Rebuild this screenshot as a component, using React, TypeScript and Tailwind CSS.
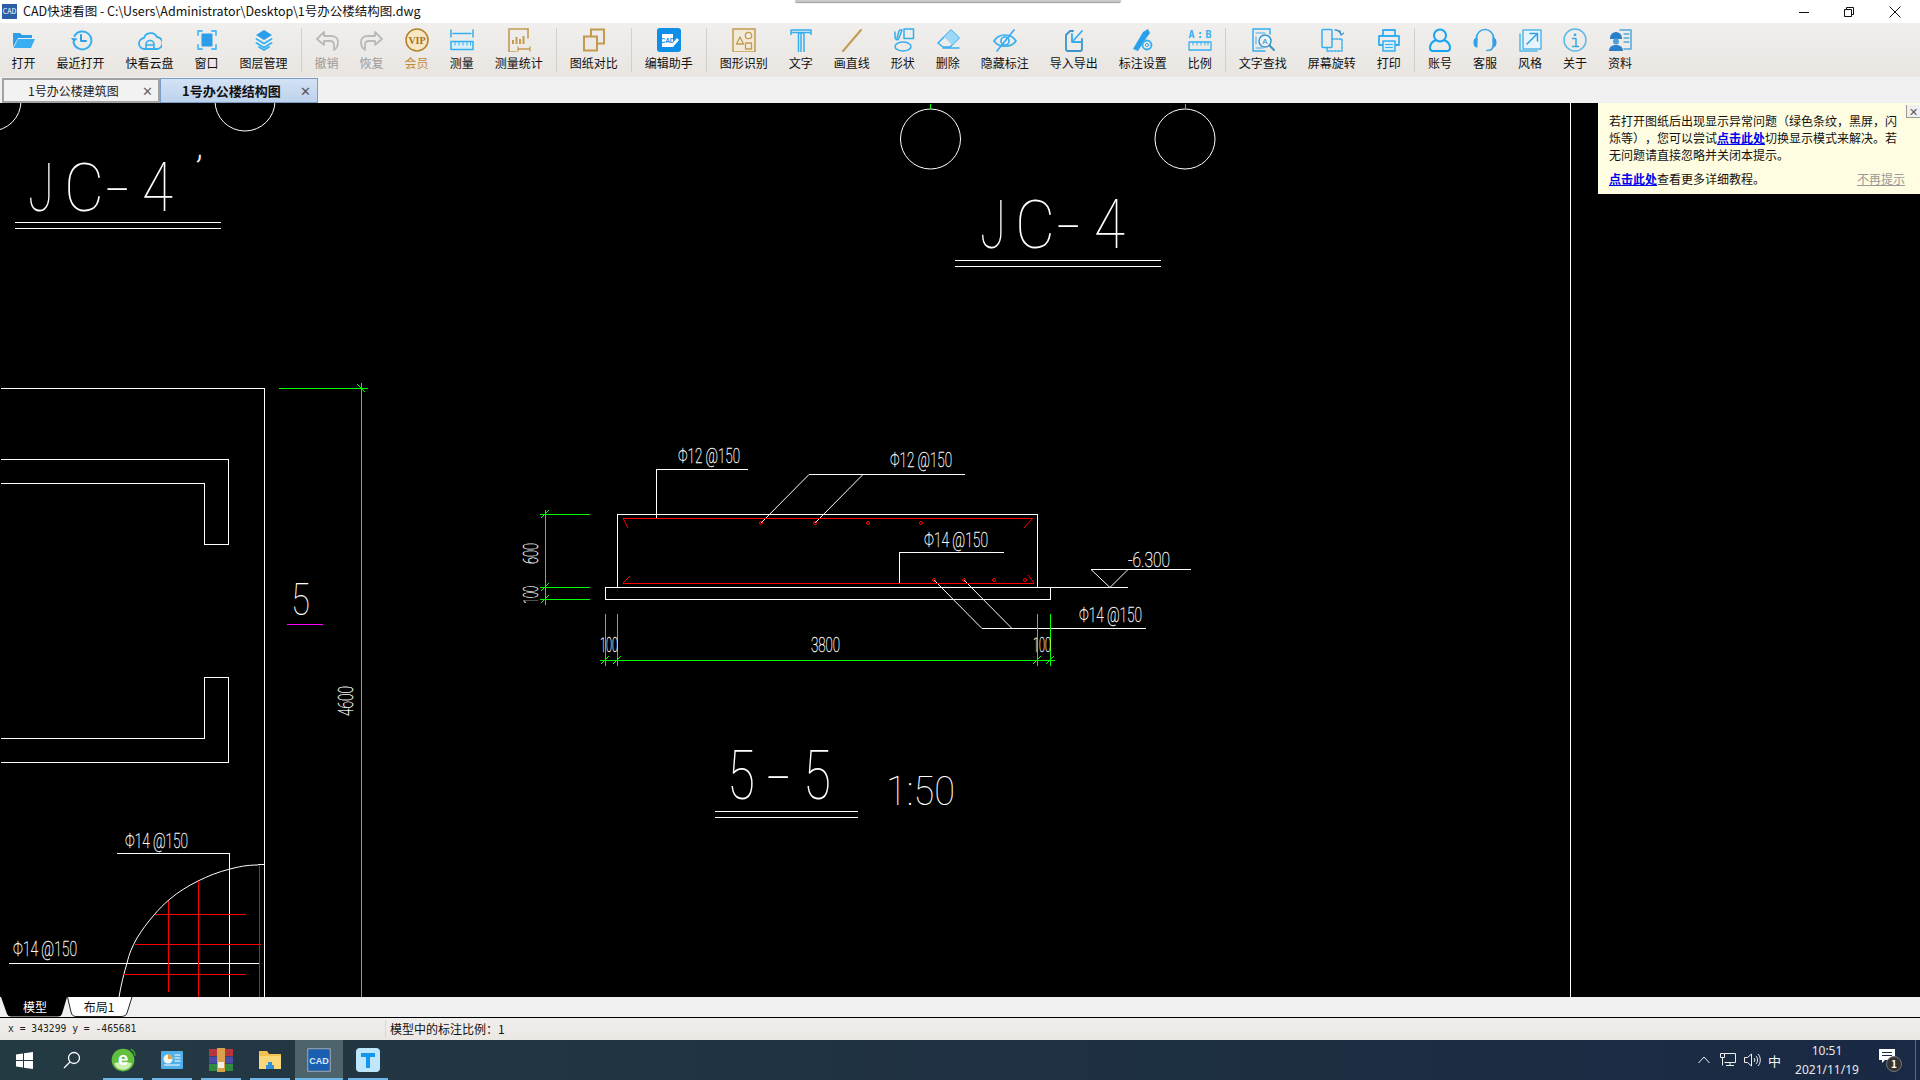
import React from "react";

const B = "#35aef0";
const G = "#c39a4f";
const D = "#b9b9b9";

type IP = { children: React.ReactNode };
const S = ({ children }: IP) => (
  <svg width="24" height="24" viewBox="0 0 24 24" fill="none" strokeLinecap="round" strokeLinejoin="round">
    {children}
  </svg>
);

const icons: Record<string, React.ReactNode> = {
  open: (
    <S>
      <path d="M1 5h7l2 2h10v3H6L1 19z" fill="#2c9fe8" />
      <path d="M6 11h17l-4 9H1.500z" fill="#38aff2" />
    </S>
  ),
  recent: (
    <S>
      <path d="M5.500 8a9 9 0 1 1-1 6" stroke={B} strokeWidth="2" />
      <path d="M2 10l3 4 3.500-3.500" fill="#2c9fe8" />
      <path d="M12 7v6h5" stroke="#2c9fe8" strokeWidth="2" />
    </S>
  ),
  cloud: (
    <S>
      <path d="M7 21a5.500 5.500 0 0 1-1-11 7 7 0 0 1 13-1 6 6 0 0 1-1 12z" stroke={B} strokeWidth="1.800" />
      <path d="M8 21v-4.500a4 4 0 0 1 8 0V21M8 17h8" stroke={B} strokeWidth="1.600" />
    </S>
  ),
  win: (
    <S>
      <rect x="6.500" y="5.500" width="11" height="13" rx="1" fill="#2a9ee8" />
      <path d="M3 7V3h4M17 3h4v4M21 17v4h-4M7 21H3v-4" stroke="#4fbcf5" strokeWidth="1.800" />
    </S>
  ),
  layer: (
    <S>
      <path d="M12 2l8 5-8 5-8-5z" fill="#2a9ee8" />
      <path d="M4.500 11l7.500 4.500 7.500-4.500M4.500 15l7.500 4.500 7.500-4.500M7 19l5 3 5-3" stroke="#3cb4f2" strokeWidth="2" />
    </S>
  ),
  undo: (
    <S>
      <path d="M9 4L2 11l7 6v-4h6c3 0 4 2 4 4v5c3-2 4-5 4-8 0-4-3-6-7-6H9z" stroke={D} strokeWidth="1.800" />
    </S>
  ),
  redo: (
    <S>
      <path d="M15 4l7 7-7 6v-4H9c-3 0-4 2-4 4v5c-3-2-4-5-4-8 0-4 3-6 7-6h7z" stroke={D} strokeWidth="1.800" />
    </S>
  ),
  vip: (
    <S>
      <circle cx="12" cy="12" r="11" stroke="#b5842f" strokeWidth="1.600" fill="#f6e8c4" />
      <text x="12" y="15.500" textAnchor="middle" fontSize="10" fontWeight="700" fill="#a8701c" fontFamily="Liberation Serif, serif">VIP</text>
    </S>
  ),
  measure: (
    <S>
      <path d="M1 2v7M23 2v7M3 5.500h18" stroke={B} strokeWidth="1.500" />
      <path d="M1 13.500h22v8H1z" stroke={B} strokeWidth="1.500" fill="#d8effa" />
      <path d="M5 14v3M9 14v3M13 14v3M17 14v3M20.500 14v3" stroke={B} />
    </S>
  ),
  stat: (
    <S>
      <path d="M21 1H2v23h7" stroke={G} strokeWidth="1.600" />
      <path d="M21 1v9" stroke={G} strokeWidth="1.600" />
      <path d="M6 12v4M9.500 9v7M13 11v5M16.500 8v8" stroke={G} strokeWidth="2" strokeLinecap="butt" />
      <path d="M11 19v4M23 19v4M12 21h10" stroke={G} strokeWidth="1.300" />
    </S>
  ),
  compare: (
    <S>
      <rect x="9" y="1.500" width="13" height="14" stroke={G} strokeWidth="2" strokeLinejoin="miter" />
      <rect x="2" y="8.500" width="13" height="14" stroke={G} strokeWidth="2" strokeLinejoin="miter" fill="#ece9e5" />
    </S>
  ),
  helper: (
    <S>
      <rect width="24" height="24" rx="3" fill="#0f8fe8" />
      <path d="M5 6h11v13H5z" fill="#fff" />
      <text x="10.500" y="14.500" textAnchor="middle" fontSize="6.500" fontWeight="700" fill="#0f8fe8" fontFamily="Liberation Sans, sans-serif">CAD</text>
      <path d="M14 17l6-7 2 2-6 7z" fill="#fff" />
    </S>
  ),
  shape: (
    <S>
      <rect x="1" y="1" width="22" height="23" stroke={G} strokeWidth="1.500" fill="#f1ead8" />
      <path d="M8 9l-3.500 7h7z" stroke={G} strokeWidth="1.300" />
      <circle cx="16.500" cy="7.500" r="3.200" stroke={G} strokeWidth="1.300" />
      <rect x="13.500" y="15" width="6" height="6" stroke={G} strokeWidth="1.300" />
    </S>
  ),
  text: (
    <S>
      <path d="M2 7V2h20v5M2 4.500h20M9 5h6v19M12 5v19M9.500 24V5" stroke={B} strokeWidth="1.500" strokeLinecap="butt" />
    </S>
  ),
  line: (
    <S>
      <path d="M3 23L21 2" stroke={G} strokeWidth="2" />
    </S>
  ),
  form: (
    <S>
      <rect x="13" y="1" width="9.500" height="9.500" stroke={B} strokeWidth="1.500" />
      <ellipse cx="12" cy="18.500" rx="8" ry="4.500" stroke={B} strokeWidth="1.500" />
      <path d="M4 4v5c0 3 3 4 4 1l3-8c0 0-2-1-3 1l-2 7" stroke={B} strokeWidth="1.500" />
    </S>
  ),
  erase: (
    <S>
      <path d="M2 15L15 2l8 8-9 9H7z" stroke={B} strokeWidth="1.500" />
      <path d="M8 9l8 8 7-7-8-8z" fill="#9fd8f6" />
      <path d="M7 20h16" stroke={B} strokeWidth="1.500" />
    </S>
  ),
  eye: (
    <S>
      <path d="M1 13c5-8 17-8 22 0-5 7-17 7-22 0z" stroke={B} strokeWidth="1.700" />
      <circle cx="12" cy="13" r="4" stroke={B} strokeWidth="1.700" />
      <path d="M4 23L21 2" stroke={B} strokeWidth="1.700" />
    </S>
  ),
  io: (
    <S>
      <path d="M11 3H8L4 7v14a2 2 0 0 0 2 2h12a2 2 0 0 0 2-2V11" stroke="#3b94c8" strokeWidth="1.800" />
      <path d="M20 3l-9 10M10 6v8h9" stroke={B} strokeWidth="1.800" />
    </S>
  ),
  mset: (
    <S>
      <path d="M2 21L12 4l5-3 2 4-5 7-7 11z" fill="#28a0ec" />
      <circle cx="16" cy="17" r="4.500" fill="#ece9e5" stroke={B} strokeWidth="1.800" />
      <circle cx="16" cy="17" r="1.600" stroke={B} />
    </S>
  ),
  ratio: (
    <S>
      <text x="12" y="9.500" textAnchor="middle" fontSize="10" fontWeight="700" fill={B} fontFamily="DejaVu Sans Mono, monospace" textLength="23" lengthAdjust="spacing">A:B</text>
      <path d="M1 14h22v8H1z" stroke={B} strokeWidth="1.300" />
      <path d="M5 14v3M9 14v3M13 14v3M17 14v3M20 14v3" stroke={B} />
    </S>
  ),
  find: (
    <S>
      <path d="M17 1H2v22h12M17 1h2v5" stroke={B} strokeWidth="1.500" />
      <path d="M5 5h9M5 20h7M5 9v7" stroke={B} />
      <circle cx="14" cy="13" r="6" stroke="#3b94c8" strokeWidth="1.500" fill="#e9f5fb" />
      <text x="14" y="16" textAnchor="middle" fontSize="8" fill="#2a86c0" fontFamily="Liberation Sans, sans-serif">A</text>
      <path d="M18.500 17.500L23 22" stroke="#3b94c8" strokeWidth="2" />
    </S>
  ),
  rotate: (
    <S>
      <rect x="2" y="1.500" width="10" height="18" rx="1" stroke={B} strokeWidth="1.500" />
      <path d="M12 11h10v12H7v-3" stroke={B} strokeWidth="1.500" strokeDasharray="2 1.500" />
      <path d="M15 2c3 0 5 1 6 5M20 3l1 4 3-2" stroke="#3b94c8" strokeWidth="1.300" />
    </S>
  ),
  print: (
    <S>
      <path d="M6 8V2h12v6M6 17H2V8h20v9h-4" stroke={B} strokeWidth="1.800" />
      <path d="M6 13h12v10H6z" stroke={B} strokeWidth="1.500" fill="#d5eefb" />
      <path d="M8.500 16.500h7M8.500 19.500h7" stroke={B} />
    </S>
  ),
  user: (
    <S>
      <circle cx="12" cy="7.500" r="6" stroke="#14a5f5" strokeWidth="2" />
      <path d="M8 12c-4 1.500-6 5-6 8 0 2 1 3 3 3h14c2 0 3-1 3-3 0-3-2-6.500-6-8" stroke="#14a5f5" strokeWidth="2" />
    </S>
  ),
  service: (
    <S>
      <path d="M3.500 14v-4a8.500 8.500 0 0 1 17 0v4M20 18c0 3-2 4.500-6 4.500" stroke="#3ba8e6" strokeWidth="1.700" />
      <path d="M4.500 9.500c-3 0-4 2.500-4 5s1 5 4 5z M19.500 9.500c3 0 4 2.500 4 5s-1 5-4 5z" fill="#2f9fe8" />
    </S>
  ),
  style: (
    <S>
      <path d="M5 2h18v19H5z" stroke="#52b8ea" strokeWidth="1.500" fill="#e7f4fb" />
      <path d="M2 6v17h17" stroke="#52b8ea" strokeWidth="1.500" />
      <path d="M9 16L19 6M12 5.500h7.500V13" stroke="#2f9fe8" strokeWidth="1.500" />
    </S>
  ),
  info: (
    <S>
      <circle cx="12" cy="12" r="11" stroke="#5cb8e8" strokeWidth="1.500" />
      <circle cx="12" cy="6.800" r="1.400" fill="#3ba8e6" />
      <path d="M9.500 10.500H13V18M9.500 18.500h6" stroke="#3ba8e6" strokeWidth="1.500" />
    </S>
  ),
  data: (
    <S>
      <path d="M12 2h11v19h-7" stroke="#4fa8dc" strokeWidth="1.500" />
      <path d="M16 6h5M16 10h5M16 14h5" stroke="#4fa8dc" strokeWidth="1.300" />
      <path d="M2 10a6 6 0 0 1 12 0v1H2z" fill="#2a80c8" />
      <circle cx="8" cy="13.500" r="3" fill="#4fa0d8" />
      <path d="M1 23c0-4 3-6 7-6s7 2 7 6z" fill="#2a80c8" />
    </S>
  ),
};

const groups: { l: string; i: string; c?: string }[][] = [
  [
    { l: "打开", i: "open" },
    { l: "最近打开", i: "recent" },
    { l: "快看云盘", i: "cloud" },
    { l: "窗口", i: "win" },
    { l: "图层管理", i: "layer" },
  ],
  [
    { l: "撤销", i: "undo", c: "text-[#9a9a9a]" },
    { l: "恢复", i: "redo", c: "text-[#9a9a9a]" },
    { l: "会员", i: "vip", c: "text-[#c28a35]" },
    { l: "测量", i: "measure" },
    { l: "测量统计", i: "stat" },
  ],
  [{ l: "图纸对比", i: "compare" }],
  [{ l: "编辑助手", i: "helper" }],
  [
    { l: "图形识别", i: "shape" },
    { l: "文字", i: "text" },
    { l: "画直线", i: "line" },
    { l: "形状", i: "form" },
    { l: "删除", i: "erase" },
    { l: "隐藏标注", i: "eye" },
    { l: "导入导出", i: "io" },
    { l: "标注设置", i: "mset" },
    { l: "比例", i: "ratio" },
  ],
  [
    { l: "文字查找", i: "find" },
    { l: "屏幕旋转", i: "rotate" },
    { l: "打印", i: "print" },
  ],
  [
    { l: "账号", i: "user" },
    { l: "客服", i: "service" },
    { l: "风格", i: "style" },
    { l: "关于", i: "info" },
    { l: "资料", i: "data" },
  ],
];

function T({ x, y, w, h, t, r, thin }: { x: number; y: number; w: number; h: number; t: string; r?: boolean; thin?: boolean }) {
  const size = h / 0.71;
  return (
    <text
      x={x}
      y={y}
      fontSize={size}
      fontWeight={100}
      fontFamily="Roboto, Lato, sans-serif"
      fill="#fff"
      stroke={thin ? "none" : "#fff"}
      strokeWidth={thin ? 0 : 0.3}
      textLength={w}
      lengthAdjust="spacingAndGlyphs"
      transform={r ? `rotate(-90 ${x} ${y})` : undefined}
    >
      {t}
    </text>
  );
}

function Drawing() {
  const W = "#fff";
  const R = "#ff0000";
  const GR = "#00ff00";
  return (
    <svg className="absolute inset-0" width="1920" height="894" viewBox="0 103 1920 894" shapeRendering="crispEdges" fill="none">
      <g stroke={W} strokeWidth="1" shapeRendering="auto">
        <circle cx="-9" cy="101" r="30" />
        <circle cx="245" cy="101" r="30" />
        <circle cx="930.500" cy="139" r="30" />
        <circle cx="1185" cy="139" r="30" />
      </g>
      <path d="M930.500 104v5M1185.500 104v5" stroke={GR} />
      <path d="M1570.500 103v894" stroke={W} strokeWidth="1.500" />
      {/* JC-4' */}
      <T x={28} y={211} w={26} h={47} t="J" thin />
      <T x={64} y={211} w={40} h={47} t="C" thin />
      <T x={105} y={211} w={25} h={47} t="-" thin />
      <T x={142} y={211} w={31} h={49} t="4" thin />
      <T x={195} y={184} w={8} h={28} t="’" />
      <path d="M15 222.500h206M15 228.500h206" stroke={W} />
      {/* JC-4 */}
      <T x={980} y={248} w={26} h={47} t="J" thin />
      <T x={1015} y={248} w={40} h={47} t="C" thin />
      <T x={1056} y={248} w={25} h={47} t="-" thin />
      <T x={1094} y={248} w={31} h={49} t="4" thin />
      <path d="M955 260.500h206M955 266.500h206" stroke={W} />
      <path
        d="M1 388.500H264.500V997M1 459.500H228.500V544.500H204.500V483.500H1M1 738.500H204.500V677.500H228.500V762.500H1"
        stroke={W}
      />
      <path d="M279 388.500h89M361.500 383v614" stroke={GR} />
      <path d="M357 384l8 8" stroke={GR} shapeRendering="auto" />
      <T x={291} y={615} w={19} h={31} t="5" thin />
      <path d="M287 624.500h36" stroke="#ff00ff" />
      <T x={353} y={716} w={30} h={14} t="4600" r />
      {/* section */}
      <path d="M617.500 514.500H1037.500V587.500H617.500z" stroke={W} />
      <path d="M605.500 587.500H1050.500V599.500H605.500z" stroke={W} />
      <path d="M1050 587.500H1128" stroke={W} />
      <g stroke={W} shapeRendering="auto">
        <path d="M1091 569.500H1191M1091 569.500L1110 587.500L1128 569.500" />
        <path d="M809 474.500L761 523M863 474.500L815 523M982 628.500L934 580M1012 628.500L964 580" />
      </g>
      <path d="M656.500 518V469.500H748M809 474.500H965M899.500 583V552.500H1004M982 628.500H1146" stroke={W} />
      <path d="M623 518.500H1033M623 583.500H1034" stroke={R} strokeWidth="1.500" />
      <g stroke={R} shapeRendering="auto">
        <path d="M623 518l5 10M1033 518l-9 10M623 583l7-7M1034 583l-6-8" />
        <circle cx="761" cy="523" r="1.500" />
        <circle cx="815" cy="523" r="1.500" />
        <circle cx="868" cy="523" r="1.500" />
        <circle cx="921" cy="523" r="1.500" />
        <circle cx="934" cy="580" r="1.500" />
        <circle cx="964" cy="580" r="1.500" />
        <circle cx="994" cy="580" r="1.500" />
        <circle cx="1025" cy="580" r="1.500" />
      </g>
      <T x={678} y={463} w={62} h={14} t="Φ12 @150" />
      <T x={890} y={467} w={62} h={14} t="Φ12 @150" />
      <T x={924} y={547} w={64} h={14} t="Φ14 @150" />
      <T x={1079} y={622} w={63} h={14} t="Φ14 @150" />
      <T x={1128} y={567} w={42} h={15} t="-6.300" />
      <path d="M545.500 510V605M540 514.500H590M540 587.500H590M540 599.500H590" stroke={GR} />
      <path d="M600 660.500H1055M605.500 614V666M617.500 614V666M1037.500 614V666M1050.500 614V666" stroke={GR} />
      <path d="M541 518l8-8M541 591l8-8M541 603l8-8M601 664l8-8M613 664l8-8M1033 664l8-8M1046 664l8-8" stroke={GR} shapeRendering="auto" />
      <T x={538} y={564} w={21} h={14} t="600" r />
      <T x={538} y={604} w={18} h={14} t="100" r />
      <T x={600} y={652} w={18} h={15} t="100" />
      <T x={811} y={652} w={29} h={15} t="3800" />
      <T x={1033} y={652} w={18} h={15} t="100" />
      {/* 5-5 */}
      <T x={727} y={799} w={28} h={49} t="5" thin />
      <T x={766} y={799} w={25} h={49} t="-" thin />
      <T x={803} y={799} w={28} h={49} t="5" thin />
      <path d="M715 811.500H858M715 817.500H858" stroke={W} />
      <T x={886} y={805} w={69} h={29} t="1:50" thin />
      {/* bottom left detail */}
      <T x={125} y={848} w={63} h={14} t="Φ14 @150" />
      <T x={13} y={956} w={64} h={14} t="Φ14 @150" />
      <path d="M117 853.500H229.500V997M9 963.500H259" stroke={W} />
      <path d="M264 864.500h-6" stroke={W} />
      <path
        d="M258 865C246 865 238 867 230 869C218 872 208 876 198 881C188 886 178 892 170 899C164 904 159 909 154 915C147 923 142 930 137 938C132 947 129 954 127 963C124 973 121 985 119 997"
        stroke={W}
        shapeRendering="auto"
      />
      <path d="M168.500 901V992M198.500 881V997M259.500 865V997M155 914.500H246M135 944.500H261M123 974.500H246" stroke={R} />
    </svg>
  );
}

function Tabbar() {
  return (
    <div className="flex h-[26px] bg-[#f0f0f0] pl-[2px] pt-px pr-0">
      <div className="flex h-[25px] w-[158px] items-center border-2 border-[#a2a2a2] bg-[#f2f2f2] text-[12px] text-[#222]">
        <span className="ml-[24px] flex-1">1号办公楼建筑图</span>
        <span className="mr-[5px] text-[13px] text-[#666]">✕</span>
      </div>
      <div className="flex h-[25px] w-[158px] items-center border border-[#7c9cc8] bg-gradient-to-b from-[#d3e2f5] to-[#bdd2ec] text-[13px] font-bold text-[#111]">
        <span className="ml-[21px] flex-1">1号办公楼结构图</span>
        <span className="mr-[6px] text-[13px] font-normal text-[#555]">✕</span>
      </div>
    </div>
  );
}

function Toolbar() {
  return (
    <div className="flex h-[54px] items-start bg-gradient-to-b from-[#f0efed] to-[#e9e5e1] pl-px text-[12px] text-[#111]">
      {groups.map((g, gi) => (
        <React.Fragment key={gi}>
          {gi > 0 && <div className="mx-[2.5px] mt-[5px] h-[44px] w-px bg-[#d2d0cc]" />}
          {g.map((it) => (
            <div key={it.l} className="flex flex-col items-center px-[10.5px] pt-[5px]">
              <div className="flex h-6 w-6 items-center justify-center">{icons[it.i]}</div>
              <span className={`mt-[3px] h-4 whitespace-nowrap leading-4 ${it.c ?? ""}`}>{it.l}</span>
            </div>
          ))}
        </React.Fragment>
      ))}
    </div>
  );
}

function TaskButton({ children, active }: { children: React.ReactNode; active?: boolean }) {
  return (
    <div className={`relative flex h-10 items-center justify-center ${active ? "w-12 bg-[#4d646d]" : "w-10"} `}>
      {children}
      <div className="absolute inset-x-0 bottom-0 h-[2px] bg-[#6fb7e8]" />
    </div>
  );
}

export default function App() {
  const font = { fontFamily: '"Noto Sans CJK SC", "Noto Sans", sans-serif' };
  return (
    <div className="relative flex h-[1080px] w-[1920px] flex-col overflow-hidden bg-white" style={font}>
      <div className="flex h-[23px] items-center bg-white">
        <div className="ml-[2px] flex h-[15px] w-[15px] items-center justify-center bg-[#2a5fa8] text-[7px] leading-none text-white">
          CAD
        </div>
        <span className="ml-[6px] whitespace-nowrap text-[12.5px] leading-none text-[#111]">
          CAD快速看图 - C:\Users\Administrator\Desktop\1号办公楼结构图.dwg
        </span>
        <div className="ml-auto flex items-center">
          <svg width="10" height="10" viewBox="0 0 10 10" className="mr-[35px]"><path d="M0 5.500h10" stroke="#111" /></svg>
          <svg width="10" height="10" viewBox="0 0 10 10" className="mr-[35px]" fill="none"><path d="M.5 2.500h7v7h-7zM2.500 2.500v-2h7v7h-2" stroke="#111" /></svg>
          <svg width="12" height="12" viewBox="0 0 12 12" className="mr-[19px]"><path d="M.5.500l11 11M11.500.500l-11 11" stroke="#111" /></svg>
        </div>
      </div>
      <div className="absolute left-[795px] top-0 h-[2px] w-[326px] rounded-b bg-[#c9c9c9] shadow-[0_1px_1px_#999]" />
      <Toolbar />
      <Tabbar />
      <div className="relative h-[894px] bg-black">
        <Drawing />
        <div className="absolute right-0 top-0 h-[91px] w-[322px] bg-[#fffde1] pl-[11px] pt-[9px] text-[12px] leading-[17px] text-[#111] [text-spacing-trim:space-all]">
          <div className="whitespace-nowrap">若打开图纸后出现显示异常问题（绿色条纹，黑屏，闪</div>
          <div className="whitespace-nowrap">
            烁等），您可以尝试<span className="font-bold text-[#0000f0] underline">点击此处</span>切换显示模式来解决。若
          </div>
          <div className="whitespace-nowrap">无问题请直接忽略并关闭本提示。</div>
          <div className="mt-[7px] flex w-[296px] justify-between whitespace-nowrap">
            <span>
              <span className="font-bold text-[#0000f0] underline">点击此处</span>查看更多详细教程。
            </span>
            <span className="text-[#999] underline">不再提示</span>
          </div>
          <div className="absolute right-0 top-[2px] flex h-[13px] w-[14px] items-center justify-center border-b border-l border-[#999] bg-[#efefef] text-[11px] leading-none text-[#555]">
            ✕
          </div>
        </div>
      </div>
      {/* layout tabs */}
      <div className="flex h-[21px] border-b border-black bg-[#f0f0f0] text-[12px]">
        <div className="relative flex h-5 w-[67px] items-center justify-center pl-[3px]">
          <svg className="absolute inset-0" width="67" height="20" viewBox="0 0 67 20">
            <path d="M1 0L7 17Q8 19.500 11 19.500H58Q61 19.500 62 17L67 0z" fill="#000" />
          </svg>
          <span className="relative text-white">模型</span>
        </div>
        <div className="relative flex h-5 w-[66px] items-center justify-center pr-[2px]">
          <svg className="absolute inset-0" width="66" height="20" viewBox="0 0 66 20">
            <path d="M0.500 0L4 15Q5 19.500 9 19.500H55Q59 19.500 60 16L65 0" fill="#fff" stroke="#222" />
          </svg>
          <span className="relative text-[#111]">布局1</span>
        </div>
      </div>
      {/* status bar */}
      <div className="flex h-[22px] items-center bg-gradient-to-b from-[#f0efed] to-[#ebe7e3]">
        <span className="ml-[8px] w-[377px] whitespace-pre text-[9.7px] text-[#222]" style={{ fontFamily: '"DejaVu Sans Mono", monospace' }}>
          x = 343299 y = -465681
        </span>
        <div className="h-[18px] w-px bg-[#d8d6d2]" />
        <span className="ml-[4px] text-[12px] text-[#111]">模型中的标注比例：1</span>
      </div>
      {/* taskbar */}
      <div className="flex h-10 items-center bg-gradient-to-r from-[#243a43] via-[#1f3142] to-[#1a2944] text-white">
        <div className="flex h-10 w-12 items-center justify-center">
          <svg width="17" height="17" viewBox="0 0 17 17" fill="#fff"><path d="M0 2.500l7-1V8H0zM8 1.300L17 0v8H8zM0 9h7v6.500l-7-1zM8 9h9v8l-9-1.300z" /></svg>
        </div>
        <div className="flex h-10 w-[47px] items-center justify-center">
          <svg width="18" height="18" viewBox="0 0 18 18" fill="none" stroke="#fff" strokeWidth="1.300"><circle cx="11" cy="7" r="5.500" /><path d="M7 11l-6 6" /></svg>
        </div>
        <div className="ml-[8px] flex gap-[9px]">
          <TaskButton>
            <svg width="26" height="26" viewBox="0 0 24 24">
              <circle cx="12" cy="12" r="10.500" fill="#62c03c" />
              <path d="M4 15c4-2 12-2 16 0-1 4-4 6-8 6s-7-2-8-6z" fill="#cdeeb4" />
              <text x="12" y="17" textAnchor="middle" fontSize="17" fontWeight="700" fill="#fff" fontFamily="Liberation Sans, sans-serif">e</text>
              <path d="M19 2c3 1 4 3 4 6" stroke="#3aa035" strokeWidth="1.500" fill="none" />
            </svg>
          </TaskButton>
          <TaskButton>
            <svg width="22" height="18" viewBox="0 0 22 18">
              <rect width="22" height="18" rx="1" fill="#4fb0ea" />
              <circle cx="7" cy="8" r="4.500" fill="#f5f5f5" />
              <path d="M7 8V3.500A4.500 4.500 0 0 1 11.500 8z" fill="#e8a23a" />
              <path d="M13.500 4h6M13.500 7h6M13.500 10h6M3 14h16" stroke="#fff" />
            </svg>
          </TaskButton>
          <TaskButton>
            <svg width="24" height="24" viewBox="0 0 24 24">
              <rect x="0" y="1" width="24" height="7" fill="#b8353b" />
              <rect x="0" y="8.500" width="24" height="7" fill="#4c4aa8" />
              <rect x="0" y="16" width="24" height="7" fill="#2e8a3e" />
              <rect x="8" y="0" width="8" height="24" fill="#d8a24a" />
              <rect x="9" y="14" width="6" height="6" fill="#f2efe6" />
            </svg>
          </TaskButton>
          <TaskButton>
            <svg width="22" height="18" viewBox="0 0 22 18">
              <path d="M0 0h8l2 3h12v15H0z" fill="#f2c14e" />
              <path d="M0 5h22v13H0z" fill="#f8d878" />
              <path d="M7 14h8v4H7zM9 11h4v3H9z" fill="#2f8fd8" />
            </svg>
          </TaskButton>
        </div>
        <div className="ml-[5px]">
          <TaskButton active>
            <svg width="24" height="24" viewBox="0 0 24 24">
              <rect x=".5" y=".5" width="23" height="23" rx="2" fill="#1b5fb0" stroke="#8d99a5" strokeWidth="1.500" />
              <text x="12" y="16" textAnchor="middle" fontSize="9" fontWeight="700" fill="#dce8f6" fontFamily="Liberation Sans, sans-serif">CAD</text>
            </svg>
          </TaskButton>
        </div>
        <div className="ml-[5px]">
          <TaskButton>
            <svg width="24" height="24" viewBox="0 0 24 24">
              <rect width="24" height="24" rx="4" fill="#bfe7fb" />
              <path d="M5 5h14v4h-5v11h-4V9H5z" fill="#1296ee" />
            </svg>
          </TaskButton>
        </div>
        <div className="ml-auto flex h-10 items-center">
          <svg width="12" height="8" viewBox="0 0 12 8" fill="none" className="mr-[10px]"><path d="M.5 7l5.500-6 5.500 6" stroke="#eee" /></svg>
          <svg width="16" height="14" viewBox="0 0 16 14" fill="none" stroke="#eee" className="mr-[8px]"><path d="M4.500.500h11v9h-11M0.500.500h4v4h-4zM2.500 4.500v8M10 9.500v3M6 12.500h8" /></svg>
          <svg width="17" height="14" viewBox="0 0 17 14" fill="none" stroke="#eee" className="mr-[7px]"><path d="M.5 4.500h3l4-3.500v12l-4-3.500h-3zM10 5c1 1 1 3 0 4M12 3c2 2 2 6 0 8M14 1c3 3 3 9 0 12" /></svg>
          <span className="w-[14px] text-[13px] leading-none text-[#f4f4f4]">中</span>
          <div className="ml-[12px] flex w-[66px] flex-col items-center text-[12px] leading-[19px] text-[#e8e8e8]" style={{ fontFamily: '"Noto Sans", sans-serif' }}>
            <span>10:51</span>
            <span>2021/11/19</span>
          </div>
          <div className="relative ml-[20px] mr-[11px] h-6 w-6">
            <svg width="17" height="16" viewBox="0 0 17 16" className="absolute left-[-1px] top-[1px]"><path d="M0 0h16v11H6l-3 3v-3H0z" fill="#fff" /><path d="M3 3.500h10M3 6.500h10" stroke="#1a2944" /></svg>
            <div className="absolute left-[6px] top-[8px] flex h-4 w-4 items-center justify-center rounded-full border border-[#777] bg-[#333] text-[10px] font-bold leading-none text-white">
              1
            </div>
          </div>
          <div className="mr-[4px] h-10 w-px bg-[#5a6b80]" />
        </div>
      </div>
    </div>
  );
}
